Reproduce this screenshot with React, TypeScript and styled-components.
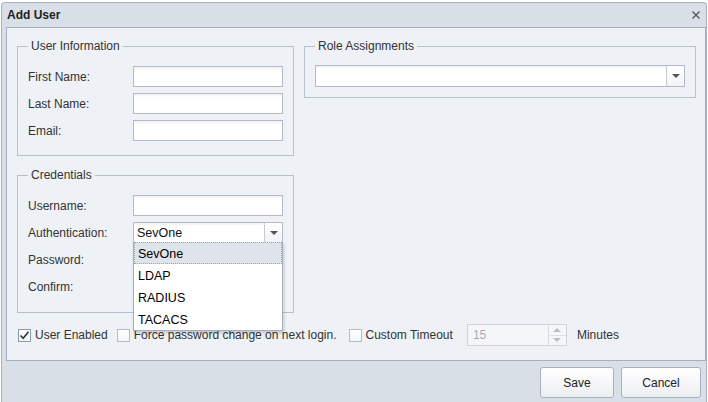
import styled, { createGlobalStyle } from "styled-components";

const GlobalStyle = createGlobalStyle`
    html, body {
        margin: 0;
        padding: 0;
        background: #ffffff;
    }
    body {
        font-family: "Liberation Sans", Arial, sans-serif;
        font-size: 12px;
        color: #333;
    }
`;

const Window = styled.div`
    box-sizing: border-box;
    width: 706px;
    height: 400px;
    margin: 2px 0 0 1px;
    border: 1px solid #a7b0c4;
    border-bottom: none;
    border-radius: 4px 4px 0 0;
    background: #d9dfe7;
    display: flex;
    flex-direction: column;
`;

const TitleBar = styled.div`
    height: 24px;
    display: flex;
    align-items: center;
    justify-content: space-between;
    padding: 0 6px 0 5px;
`;

const Title = styled.div`
    font-weight: bold;
    font-size: 12px;
    color: #222;
`;

const Close = styled.div`
    display: flex;
    align-items: center;
    cursor: pointer;
`;

const Body = styled.div`
    box-sizing: border-box;
    height: 334px;
    margin-left: 4px;
    border: 1px solid #a6aec2;
    background: #eef1f5;
    padding: 11px 0 0 10px;
    display: grid;
    grid-template-columns: 277px 392px;
    column-gap: 10px;
    align-content: start;
`;

const Column = styled.div`
    display: flex;
    flex-direction: column;
    gap: 12px;
`;

const Group = styled.fieldset<{ $bottom?: number }>`
    margin: 0;
    border: 1px solid #b8bfcd;
    padding: 13px 9px ${(p) => p.$bottom ?? 14}px 10px;
    min-width: 0;
    display: flex;
    flex-direction: column;
    gap: 6px;
`;

const Legend = styled.legend`
    padding: 0 3px;
    line-height: 14px;
    font-size: 12px;
    color: #333;
`;

const Row = styled.div`
    display: grid;
    grid-template-columns: 105px 150px;
    align-items: center;
    height: 21px;
`;

const Label = styled.label`
    color: #333;
`;

const Input = styled.div`
    box-sizing: border-box;
    height: 21px;
    border: 1px solid #b4bbc8;
    background: #fff;
    box-shadow: inset 0 2px 2px rgba(0, 0, 0, 0.05);
`;

const SelectBox = styled.div<{ $height?: number }>`
    position: relative;
    box-sizing: border-box;
    height: ${(p) => p.$height ?? 21}px;
    border: 1px solid #b4bbc8;
    background: #fff;
    box-shadow: inset 0 2px 2px rgba(0, 0, 0, 0.05);
    display: flex;
    align-items: center;
`;

const SelectValue = styled.div`
    flex: 1;
    padding-left: 3px;
    color: #111;
    font-size: 12.5px;
`;

const ArrowButton = styled.div`
    width: 17px;
    align-self: stretch;
    border-left: 1px solid #c5cad4;
    background: linear-gradient(#ffffff, #f1f3f6);
    display: flex;
    align-items: center;
    justify-content: center;
`;

const DownArrow = styled.div`
    width: 0;
    height: 0;
    border-left: 4px solid transparent;
    border-right: 4px solid transparent;
    border-top: 4px solid #555;
`;

const RoleGroup = styled(Group)`
    padding: 12px 10px 10px 10px;
    align-self: start;
`;

const DropList = styled.div`
    position: absolute;
    z-index: 10;
    top: 100%;
    left: -1px;
    width: 150px;
    box-sizing: border-box;
    border: 1px solid #a7afbf;
    background: #fff;
    box-shadow: 1px 2px 3px rgba(0, 0, 0, 0.18);
`;

const DropItem = styled.div<{ $active?: boolean }>`
    box-sizing: border-box;
    height: 22px;
    display: flex;
    align-items: center;
    padding: 2px 0 0 3px;
    font-size: 12.5px;
    color: #000;
    background: ${(p) => (p.$active ? "#dfe3ea" : "#fff")};
    border: 1px dotted ${(p) => (p.$active ? "#9aa3b4" : "transparent")};
    margin-top: ${(p) => (p.$active ? "-1px" : "0")};
`;

const OptionsRow = styled.div`
    grid-column: 1 / -1;
    margin-top: 11px;
    height: 22px;
    display: flex;
    align-items: center;
    padding-left: 1px;
`;

const Check = styled.label<{ $gap?: number }>`
    display: flex;
    align-items: center;
    gap: 4px;
    margin-right: ${(p) => p.$gap ?? 10}px;
    color: #333;
    white-space: nowrap;
`;

const Box = styled.span<{ $checked?: boolean }>`
    box-sizing: border-box;
    width: 13px;
    height: 13px;
    border: 1px solid ${(p) => (p.$checked ? "#8f98aa" : "#b5bcc9")};
    background: linear-gradient(#ffffff, #f3f5f8);
    display: flex;
    align-items: center;
    justify-content: center;
`;

const NumberField = styled.div`
    box-sizing: border-box;
    width: 100px;
    height: 22px;
    border: 1px solid #cfd3db;
    background: #f5f6f8;
    display: flex;
    margin-right: 10px;
`;

const NumberValue = styled.div`
    flex: 1;
    display: flex;
    align-items: center;
    padding-left: 5px;
    color: #a9adb5;
`;

const Spinner = styled.div`
    width: 17px;
    border-left: 1px solid #d8dce2;
    display: flex;
    flex-direction: column;
`;

const SpinHalf = styled.div<{ $up?: boolean }>`
    flex: 1;
    display: flex;
    align-items: center;
    justify-content: center;
    border-top: ${(p) => (p.$up ? "none" : "1px solid #dde0e5")};
    &::after {
        content: "";
        width: 0;
        height: 0;
        border-left: 4px solid transparent;
        border-right: 4px solid transparent;
        ${(p) =>
            p.$up
                ? "border-bottom: 4px solid #b9bdc5;"
                : "border-top: 4px solid #b9bdc5;"}
    }
`;

const Footer = styled.div`
    flex: 1;
    display: flex;
    justify-content: flex-end;
    align-items: flex-start;
    gap: 7px;
    padding: 6px 5px 0 0;
`;

const Button = styled.button<{ $width: number }>`
    box-sizing: border-box;
    width: ${(p) => p.$width}px;
    height: 31px;
    border: 1px solid #a9b1c1;
    border-radius: 3px;
    background: linear-gradient(#ffffff, #eceef2);
    font-family: "Liberation Sans", Arial, sans-serif;
    font-size: 12px;
    color: #222;
    cursor: pointer;
`;

const CheckMark = () => (
    <svg width="11" height="11" viewBox="0 0 11 11">
        <path
            d="M1.5 5.5 L4.2 8.3 L9.5 1.8"
            fill="none"
            stroke="#333"
            strokeWidth="1.6"
        />
    </svg>
);

const authOptions = ["SevOne", "LDAP", "RADIUS", "TACACS"];

const App = () => {
    return (
        <>
            <GlobalStyle />
            <Window>
                <TitleBar>
                    <Title>Add User</Title>
                    <Close title="close">
                        <svg width="8" height="8" viewBox="0 0 8 8">
                            <path
                                d="M0.5 0.5 L7.5 7.5 M7.5 0.5 L0.5 7.5"
                                stroke="#555"
                                strokeWidth="1.3"
                            />
                        </svg>
                    </Close>
                </TitleBar>
                <Body>
                    <Column>
                        <Group>
                            <Legend>User Information</Legend>
                            <Row>
                                <Label>First Name:</Label>
                                <Input />
                            </Row>
                            <Row>
                                <Label>Last Name:</Label>
                                <Input />
                            </Row>
                            <Row>
                                <Label>Email:</Label>
                                <Input />
                            </Row>
                        </Group>
                        <Group $bottom={15}>
                            <Legend>Credentials</Legend>
                            <Row>
                                <Label>Username:</Label>
                                <Input />
                            </Row>
                            <Row>
                                <Label>Authentication:</Label>
                                <SelectBox>
                                    <SelectValue>SevOne</SelectValue>
                                    <ArrowButton>
                                        <DownArrow />
                                    </ArrowButton>
                                    <DropList>
                                        {authOptions.map((opt, i) => (
                                            <DropItem key={opt} $active={i === 0}>
                                                {opt}
                                            </DropItem>
                                        ))}
                                    </DropList>
                                </SelectBox>
                            </Row>
                            <Row>
                                <Label>Password:</Label>
                                <Input />
                            </Row>
                            <Row>
                                <Label>Confirm:</Label>
                                <Input />
                            </Row>
                        </Group>
                    </Column>
                    <RoleGroup>
                        <Legend>Role Assignments</Legend>
                        <SelectBox $height={22}>
                            <SelectValue />
                            <ArrowButton>
                                <DownArrow />
                            </ArrowButton>
                        </SelectBox>
                    </RoleGroup>
                    <OptionsRow>
                        <Check $gap={9}>
                            <Box $checked>
                                <CheckMark />
                            </Box>
                            User Enabled
                        </Check>
                        <Check $gap={12}>
                            <Box />
                            Force password change on next login.
                        </Check>
                        <Check $gap={14}>
                            <Box />
                            Custom Timeout
                        </Check>
                        <NumberField>
                            <NumberValue>15</NumberValue>
                            <Spinner>
                                <SpinHalf $up />
                                <SpinHalf />
                            </Spinner>
                        </NumberField>
                        <Label>Minutes</Label>
                    </OptionsRow>
                </Body>
                <Footer>
                    <Button $width={74}>Save</Button>
                    <Button $width={80}>Cancel</Button>
                </Footer>
            </Window>
        </>
    );
};

export default App;
